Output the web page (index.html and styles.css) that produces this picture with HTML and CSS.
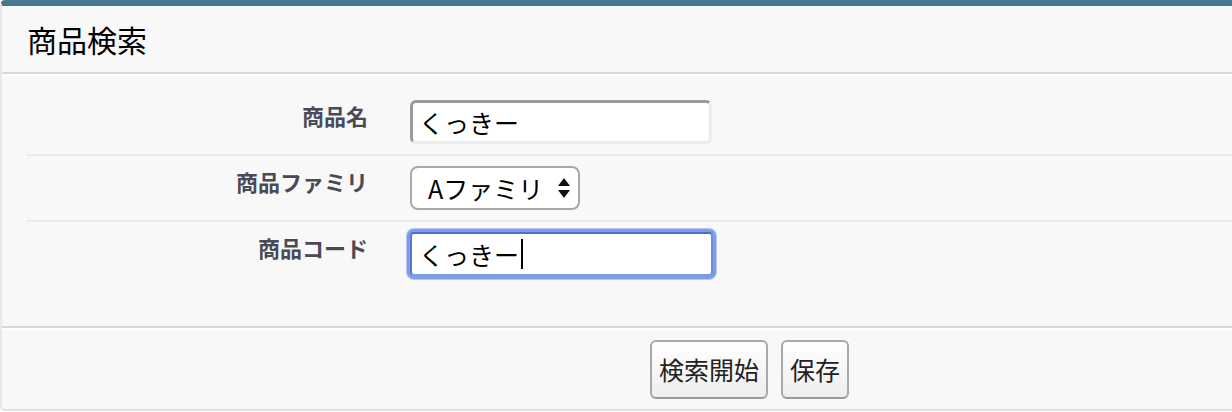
FILE: index.html
```html
<!DOCTYPE html>
<html lang="ja">
<head>
<meta charset="utf-8">
<title>商品検索</title>
<link rel="stylesheet" href="styles.css">
</head>
<body>
<div class="panel">
  <div class="panel-header"><h2 class="panel-title">商品検索</h2></div>
  <div class="panel-body">
    <div class="row">
      <label class="row-label" for="name">商品名</label>
      <div class="row-field"><input id="name" class="text-input" type="text" value="くっきー"></div>
    </div>
    <div class="row">
      <label class="row-label" for="family">商品ファミリ</label>
      <div class="row-field">
        <span class="select-wrap">
          <select id="family" class="select"><option>Aファミリ</option><option>Bファミリ</option></select>
          <svg class="select-arrows" width="12" height="20" viewBox="0 0 12 20"><path d="M6 0 L12 8 L0 8 Z M0 12 L12 12 L6 20 Z" fill="#111"/></svg>
        </span>
      </div>
    </div>
    <div class="row row-last">
      <span class="row-label">商品コード</span>
      <div class="row-field"><div class="text-input is-focused" role="textbox">くっきー<span class="caret"></span></div></div>
    </div>
  </div>
  <div class="panel-footer">
    <div class="footer-inner">
      <button class="btn" type="button">検索開始</button>
      <button class="btn" type="button">保存</button>
    </div>
  </div>
</div>
</body>
</html>
```
FILE: styles.css
```css
* { box-sizing: border-box; }
html, body { margin: 0; padding: 0; }
body {
  background: #ffffff;
  font-family: "Noto Sans CJK JP", "Noto Sans", sans-serif;
  overflow: hidden;
  width: 1232px;
  height: 412px;
}
.panel {
  width: 1240px;
  background: #f8f8f8;
  border-top: 6px solid #48788f;
  border-left: 2px solid #e8e8e8;
  border-bottom: 2px solid #e2e2e2;
  border-radius: 5px 0 0 5px;
}
.panel-header {
  height: 68px;
  border-bottom: 2px solid #d8d8d8;
  display: flex;
  align-items: center;
  padding-left: 25px;
}
.panel-title {
  margin: 0;
  font-size: 30px;
  font-weight: 400;
  color: #000;
  line-height: 1;
}
.panel-body {
  border-top: 2px solid #ffffff;
  padding: 14px 0 40px 0;
}
.row {
  margin-left: 24px;
  display: grid;
  grid-template-columns: 342px 1fr;
  column-gap: 42px;
  padding: 10px 0;
  border-bottom: 2px solid #ececec;
}
.row-last { border-bottom: none; }
.row-label {
  text-align: right;
  font-size: 22px;
  font-weight: 700;
  color: #4a4a56;
  line-height: 28px;
  padding-top: 1px;
}
.row-field { display: flex; align-items: flex-start; }
.text-input {
  width: 302px;
  height: 44px;
  background: #fff;
  border: 3px solid;
  border-color: #9a9a9a #ececec #ececec #9a9a9a;
  border-radius: 6px;
  padding: 0 6px;
  font-family: "Noto Sans CJK JP", sans-serif;
  font-size: 25px;
  color: #000;
  outline: none;
  display: flex;
  align-items: center;
}
.text-input.is-focused {
  width: 303px;
  border: 2px solid;
  border-color: #4c6fc8 #6a8ee2 #7a9be6 #5577d0;
  box-shadow: 0 0 0 3px #7d9de8, 0 0 0 4px #b6c8f2;
  border-radius: 4px;
  padding: 0 7px;
  line-height: 1;
}
.caret {
  display: inline-block;
  width: 2px;
  height: 30px;
  background: #000;
  margin-left: 2px;
}
.select-wrap {
  position: relative;
  display: inline-block;
}
.select {
  appearance: none;
  -webkit-appearance: none;
  width: 170px;
  height: 44px;
  background: #fff;
  border: 2px solid #a8a8a8;
  border-radius: 8px;
  padding: 0 30px 0 16px;
  font-family: "Noto Sans CJK JP", sans-serif;
  font-size: 25px;
  color: #000;
  outline: none;
}
.select-arrows {
  position: absolute;
  right: 10px;
  top: 12px;
  pointer-events: none;
}
.panel-footer {
  border-top: 2px solid #d8d8d8;
}
.footer-inner {
  border-top: 2px solid #ffffff;
  padding: 10px 0 10px 648px;
  display: flex;
  gap: 13px;
}
.btn {
  height: 59px;
  padding: 0 7px;
  background: linear-gradient(#ffffff, #eeeeee);
  border: 2px solid #a9a9a9;
  border-bottom-color: #999;
  border-radius: 6px;
  font-family: "Noto Sans CJK JP", sans-serif;
  font-size: 25px;
  color: #222;
  line-height: 1;
}
```
